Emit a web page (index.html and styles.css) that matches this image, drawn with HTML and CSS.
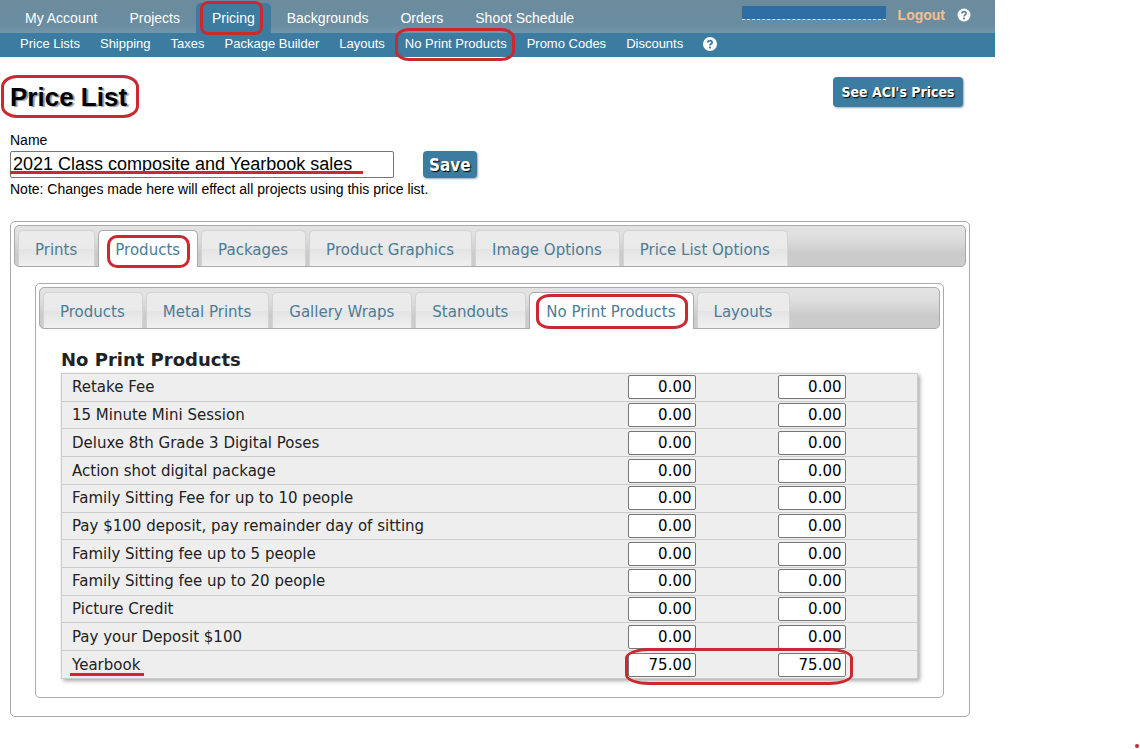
FILE: index.html
```html
<!DOCTYPE html>
<html lang="en">
<head>
  <meta charset="UTF-8">
  <meta name="viewport" content="width=device-width, initial-scale=1.0">
  <title>Price List</title>
  <link rel="stylesheet" href="styles.css">
</head>
<body>
  <div class="page">
    <header>
      <div class="top-bar">
        <nav class="main-nav">
          <a href="#">My Account</a>
          <a href="#">Projects</a>
          <a href="#" class="active">Pricing<span class="ring ring-pricing"></span></a>
          <a href="#">Backgrounds</a>
          <a href="#">Orders</a>
          <a href="#">Shoot Schedule</a>
        </nav>
        <div class="user">
          <span class="user-name"></span>
          <a href="#" class="logout">Logout</a>
          <a href="#" class="help" aria-label="Help">
            <svg width="14" height="14" viewBox="0 0 14 14"><circle cx="7" cy="7" r="6.5" fill="#fff"/><path d="M4.9 5.5C4.9 3 9.1 3 9.1 5.4C9.1 6.9 7 6.8 7 8.4" fill="none" stroke="#5f8396" stroke-width="1.7"/><circle cx="7" cy="10.5" r="1.1" fill="#5f8396"/></svg>
          </a>
        </div>
      </div>
      <nav class="sub-nav">
        <a href="#">Price Lists</a>
        <a href="#">Shipping</a>
        <a href="#">Taxes</a>
        <a href="#">Package Builder</a>
        <a href="#">Layouts</a>
        <a href="#">No Print Products<span class="ring ring-nav"></span></a>
        <a href="#">Promo Codes</a>
        <a href="#">Discounts</a>
        <a href="#" class="help" aria-label="Help">
          <svg width="14" height="14" viewBox="0 0 14 14"><circle cx="7" cy="7" r="7" fill="#fff"/><path d="M4.9 5.5C4.9 3 9.1 3 9.1 5.4C9.1 6.9 7 6.8 7 8.4" fill="none" stroke="#3c7ca0" stroke-width="1.8"/><circle cx="7" cy="10.6" r="1.1" fill="#3c7ca0"/></svg>
        </a>
      </nav>
    </header>

    <main>
      <div class="title-row">
        <h1>Price List<span class="ring ring-title"></span></h1>
        <button type="button" class="btn">See ACI's Prices</button>
      </div>

      <form>
        <label for="name">Name</label>
        <div class="name-row">
          <div class="name-field">
            <input type="text" id="name" value="2021 Class composite and Yearbook sales">
            <span class="underline underline-name"></span>
          </div>
          <button type="button" class="btn btn-save">Save</button>
        </div>
        <p class="note">Note: Changes made here will effect all projects using this price list.</p>
      </form>

      <!-- Price list tabs -->
      <section class="tabs">
        <div class="tab-bar">
          <a href="#">Prints</a>
          <a href="#" class="selected">Products<span class="ring ring-tab"></span></a>
          <a href="#">Packages</a>
          <a href="#">Product Graphics</a>
          <a href="#">Image Options</a>
          <a href="#">Price List Options</a>
        </div>

        <!-- Product type tabs -->
        <div class="tabs tabs-inner">
          <div class="tab-bar">
            <a href="#">Products</a>
            <a href="#">Metal Prints</a>
            <a href="#">Gallery Wraps</a>
            <a href="#">Standouts</a>
            <a href="#" class="selected">No Print Products<span class="ring ring-subtab"></span></a>
            <a href="#">Layouts</a>
          </div>
          <div class="panel">
            <h2>No Print Products</h2>
            <table>
              <tr><td>Retake Fee</td><td class="price"><input type="text" value="0.00" aria-label="Retake Fee cost"></td><td class="price last"><input type="text" value="0.00" aria-label="Retake Fee price"></td></tr>
              <tr><td>15 Minute Mini Session</td><td class="price"><input type="text" value="0.00" aria-label="Mini Session cost"></td><td class="price last"><input type="text" value="0.00" aria-label="Mini Session price"></td></tr>
              <tr><td>Deluxe 8th Grade 3 Digital Poses</td><td class="price"><input type="text" value="0.00" aria-label="Digital Poses cost"></td><td class="price last"><input type="text" value="0.00" aria-label="Digital Poses price"></td></tr>
              <tr><td>Action shot digital package</td><td class="price"><input type="text" value="0.00" aria-label="Action shot cost"></td><td class="price last"><input type="text" value="0.00" aria-label="Action shot price"></td></tr>
              <tr><td>Family Sitting Fee for up to 10 people</td><td class="price"><input type="text" value="0.00" aria-label="Sitting 10 people cost"></td><td class="price last"><input type="text" value="0.00" aria-label="Sitting 10 people price"></td></tr>
              <tr><td>Pay $100 deposit, pay remainder day of sitting</td><td class="price"><input type="text" value="0.00" aria-label="Deposit and remainder cost"></td><td class="price last"><input type="text" value="0.00" aria-label="Deposit and remainder price"></td></tr>
              <tr><td>Family Sitting fee up to 5 people</td><td class="price"><input type="text" value="0.00" aria-label="Sitting 5 people cost"></td><td class="price last"><input type="text" value="0.00" aria-label="Sitting 5 people price"></td></tr>
              <tr><td>Family Sitting fee up to 20 people</td><td class="price"><input type="text" value="0.00" aria-label="Sitting 20 people cost"></td><td class="price last"><input type="text" value="0.00" aria-label="Sitting 20 people price"></td></tr>
              <tr><td>Picture Credit</td><td class="price"><input type="text" value="0.00" aria-label="Picture Credit cost"></td><td class="price last"><input type="text" value="0.00" aria-label="Picture Credit price"></td></tr>
              <tr><td>Pay your Deposit $100</td><td class="price"><input type="text" value="0.00" aria-label="Deposit cost"></td><td class="price last"><input type="text" value="0.00" aria-label="Deposit price"></td></tr>
              <tr><td><span class="marked">Yearbook<span class="underline underline-item"></span></span></td><td class="price"><input type="text" value="75.00" aria-label="Yearbook cost"><span class="ring ring-prices"></span></td><td class="price last"><input type="text" value="75.00" aria-label="Yearbook price"></td></tr>
            </table>
          </div>
        </div>
      </section>
    </main>
  </div>
  <span class="dot"></span>
</body>
</html>
```
FILE: styles.css
```css
* { box-sizing: border-box; }
body {
  margin: 0;
  font-family: "Liberation Sans", Arial, sans-serif;
  font-size: 14px;
  color: #000;
  background-color: #fff;
}
a { text-decoration: none; }
.page { margin-right: 145px; }

/* Header */
.top-bar {
  display: flex;
  justify-content: space-between;
  height: 33px;
  padding: 3px 24px 0 9px;
  background: linear-gradient(#6c8b9d, #6a8da1 75%, #7296aa);
}
.main-nav { display: flex; }
.main-nav a {
  position: relative;
  padding: 0 16px;
  line-height: 30px;
  color: #fff;
}
.main-nav .active {
  background-color: #3c7ca0;
  border-radius: 5px 5px 0 0;
}
.user {
  display: flex;
  align-items: center;
  height: 24px;
}
.user-name {
  width: 144px;
  height: 14px;
  margin: -4px 12px 0 0;
  border-bottom: 1px dashed #d5dfe5;
  background: #2e6da1;
  background-clip: padding-box;
}
.logout {
  font-weight: bold;
  color: #f4c08f;
}
.help { display: flex; }
.user .help { margin-left: 12px; }
.sub-nav {
  display: flex;
  align-items: center;
  gap: 20px;
  height: 24px;
  padding: 0 20px 3px;
  background-color: #3c7ca0;
}
.sub-nav a {
  position: relative;
  font-size: 13px;
  color: #fff;
}

/* Title and name */
main { padding: 20px 25px 0 10px; }
.title-row {
  display: flex;
  justify-content: space-between;
  padding-right: 7px;
}
h1 {
  position: relative;
  margin: 0;
  font-size: 26px;
  line-height: 40px;
  text-shadow: 2px 1px 1px #8a98a4;
}
.btn {
  height: 30px;
  padding: 0 6px;
  border: none;
  border-radius: 4px;
  background-color: #3c7ca0;
  box-shadow: 1px 1px 2px #9ab;
  font-family: "DejaVu Sans Condensed", "DejaVu Sans", sans-serif;
  font-size: 14px;
  font-weight: bold;
  color: #fff;
  text-shadow: 1px 1px 1px #000;
}
.title-row .btn { width: 130px; padding: 0; }
form { padding-top: 15px; }
label {
  display: block;
  line-height: 16px;
}
.name-row {
  display: flex;
  gap: 29px;
  margin-top: 3px;
}
.name-field {
  position: relative;
  width: 40%;
}
.name-field input {
  display: block;
  width: 100%;
  height: 27px;
  padding: 0 2px;
  border: 1px solid #767676;
  border-radius: 2px;
  font-family: inherit;
  font-size: 18px;
}
.btn-save {
  height: 27px;
  font-size: 17px;
}
.note {
  margin: 3px 0 24px;
  line-height: 16px;
}

/* Tabs */
.tabs {
  padding: 3px;
  border: 1px solid #aaa;
  border-radius: 5px;
  font-family: "DejaVu Sans", Verdana, sans-serif;
  font-size: 15px;
  color: #222;
}
.tab-bar {
  display: flex;
  gap: 3px;
  height: 42px;
  padding: 4px 3px 0;
  border: 1px solid #aaa;
  border-radius: 5px;
  background: linear-gradient(#e3e3e3, #dedede 30%, #cacaca 70%, #cdcdcd);
}
.tab-bar a {
  position: relative;
  padding: 0 17px 0 16px;
  border: 1px solid #d3d3d3;
  border-bottom: none;
  border-radius: 5px 5px 0 0;
  background: linear-gradient(#ececec, #eaeaea 50%, #e4e4e4 52%, #efefef);
  line-height: 38px;
  color: #4b7c96;
  white-space: nowrap;
}
.tab-bar .selected {
  height: 37px;
  border-color: #aaa;
  background: #fff;
}
.tabs-inner { margin: 16px 22px 15px 21px; }

/* Products table */
.panel { padding: 20px 22px 15px; }
h2 {
  margin: 0;
  font-size: 18px;
  line-height: 22px;
}
table {
  width: 100%;
  height: 306px;
  margin-top: 2px;
  border: 1px solid #ccc;
  border-collapse: collapse;
  background-color: #eee;
  box-shadow: 2px 2px 4px #aaa;
}
td {
  height: 27px;
  padding: 0 0 0 10px;
  border-top: 1px solid #ccc;
}
.price {
  position: relative;
  width: 150px;
  padding: 0;
}
.last { width: 140px; }
.price input {
  display: block;
  width: 68px;
  height: 24px;
  padding: 0 3px;
  border: 1px solid #767676;
  border-radius: 2px;
  font-family: inherit;
  font-size: 15px;
  text-align: right;
}

/* Red marks */
.ring {
  position: absolute;
  z-index: 1;
  border: 3px solid #cb2830;
  border-radius: 14px / 10px;
  pointer-events: none;
}
.ring-pricing { inset: -2px 8px -2px 4px; border-radius: 8px; }
.ring-nav { inset: -8px -8px -10px -10px; }
.ring-title { inset: -2px -12px -1px -9px; border-radius: 16px / 12px; }
.ring-tab { inset: 4px 7px -1px 8px; border-radius: 10px; }
.ring-subtab { inset: 1px 5px 0 6px; }
.ring-prices {
  top: -3px;
  left: -3px;
  width: 228px;
  height: 37px;
  border-radius: 24px / 10px;
}
.marked { position: relative; }
.underline {
  position: absolute;
  height: 3px;
  background-color: #cb2830;
}
.underline-name {
  left: 0;
  right: 31px;
  bottom: 4px;
}
.underline-item {
  left: -2px;
  right: -4px;
  bottom: -2px;
}
.dot {
  position: absolute;
  right: 1px;
  bottom: 1px;
  width: 4px;
  height: 4px;
  border-radius: 50%;
  background-color: #cb2830;
}
```
